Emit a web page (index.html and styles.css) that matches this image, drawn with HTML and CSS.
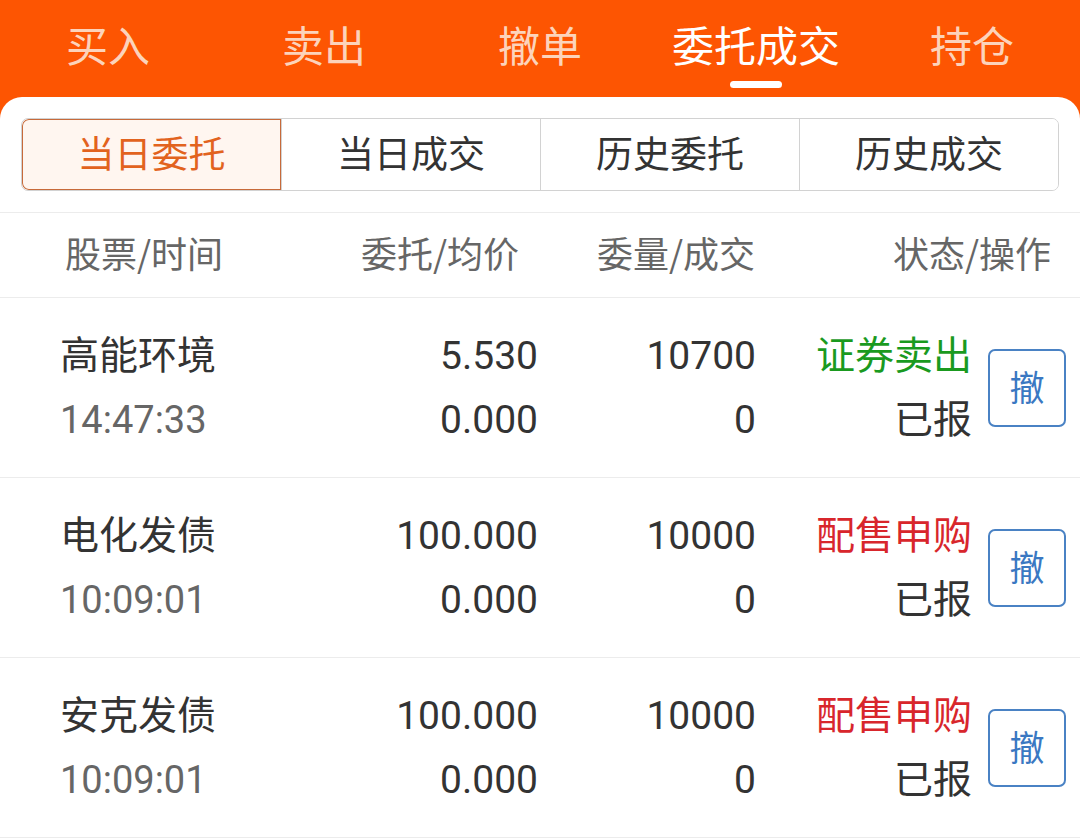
FILE: index.html
```html
<!doctype html>
<html lang="zh-cn">
<head>
  <meta charset="utf-8" />
  <meta name="viewport" content="width=device-width,initial-scale=1" />
  <title>委托成交</title>
  <link rel="stylesheet" href="styles.css">
</head>
<body>
  <div class="page">
    <nav class="tabs">
      <a class="tab">买入</a>
      <a class="tab">卖出</a>
      <a class="tab">撤单</a>
      <a class="tab active">委托成交</a>
      <a class="tab">持仓</a>
    </nav>

    <div class="card">
      <div class="seg-wrap">
        <div class="seg">
          <button class="seg-btn on">当日委托</button>
          <button class="seg-btn">当日成交</button>
          <button class="seg-btn">历史委托</button>
          <button class="seg-btn">历史成交</button>
        </div>
      </div>

      <div class="head">
        <div>股票/时间</div>
        <div class="r">委托/均价</div>
        <div class="r">委量/成交</div>
        <div class="r">状态/操作</div>
      </div>

      <div class="row">
        <div class="cell">
          <div class="name">高能环境</div>
          <div class="time">14:47:33</div>
        </div>
        <div class="cell r">
          <div class="num">5.530</div>
          <div class="num">0.000</div>
        </div>
        <div class="cell r">
          <div class="num">10700</div>
          <div class="num">0</div>
        </div>
        <div class="cell r">
          <div class="type sell">证券卖出</div>
          <div class="state">已报</div>
        </div>
        <div class="op"><button class="btn-cancel">撤</button></div>
      </div>

      <div class="row">
        <div class="cell">
          <div class="name">电化发债</div>
          <div class="time">10:09:01</div>
        </div>
        <div class="cell r">
          <div class="num">100.000</div>
          <div class="num">0.000</div>
        </div>
        <div class="cell r">
          <div class="num">10000</div>
          <div class="num">0</div>
        </div>
        <div class="cell r">
          <div class="type buy">配售申购</div>
          <div class="state">已报</div>
        </div>
        <div class="op"><button class="btn-cancel">撤</button></div>
      </div>

      <div class="row">
        <div class="cell">
          <div class="name">安克发债</div>
          <div class="time">10:09:01</div>
        </div>
        <div class="cell r">
          <div class="num">100.000</div>
          <div class="num">0.000</div>
        </div>
        <div class="cell r">
          <div class="num">10000</div>
          <div class="num">0</div>
        </div>
        <div class="cell r">
          <div class="type buy">配售申购</div>
          <div class="state">已报</div>
        </div>
        <div class="op"><button class="btn-cancel">撤</button></div>
      </div>
    </div>
  </div>
</body>
</html>
```

FILE: styles.css
```css
* { box-sizing:border-box; }
html, body { margin:0; padding:0; background:#fff; }
body { font-family: Roboto, "Noto Sans CJK SC", sans-serif; color:#333; }
.page { background:#fd5502; min-height:840px; display:flex; flex-direction:column; }

/* top tabs */
.tabs { display:grid; grid-template-columns: repeat(5, 1fr); height:97px; }
.tab { position:relative; display:flex; align-items:center; justify-content:center; padding-bottom:10px; font-size:42px; color:#fcd3bb; }
.tab.active { color:#fff; }
.tab.active::after { content:""; position:absolute; left:50%; bottom:9px; width:52px; height:7px; margin-left:-26px; border-radius:4px; background:#fff; }

/* card */
.card { flex:1; background:#fff; border-radius:22px 22px 0 0; }
.seg-wrap { padding:21px 21px 21px; border-bottom:1px solid #ececec; }
.seg { display:grid; grid-template-columns: repeat(4, 1fr); height:73px; border:1px solid #d2d2d2; border-radius:7px; overflow:hidden; }
.seg-btn { border:0; border-left:1px solid #d2d2d2; background:#fff; font-family:inherit; font-size:37px; color:#333; padding:0 0 5px; }
.seg-btn:first-child { border-left:0; }
.seg-btn.on { background:#fff6f0; color:#e2631e; box-shadow: inset 0 0 0 1px #c76a3a; border-radius:7px 0 0 7px; }

/* table header */
.head { display:grid; grid-template-columns: 296px 150px 244px 296px; padding:0 28px 0 65px; height:85px; align-items:center; font-family:"Noto Sans CJK SC", sans-serif; font-size:36px; color:#666; border-bottom:1px solid #ececec; white-space:nowrap; }
.head > div { padding-bottom:6px; }
.r { text-align:right; }

/* rows */
.row { display:grid; grid-template-columns: 302px 176px 218px 216px 94px; padding-left:60px; height:180px; align-items:center; border-bottom:1px solid #ececec; }
.cell { display:flex; flex-direction:column; gap:14px; white-space:nowrap; }
.name, .type, .state { font-size:39px; line-height:50px; color:#333; }
.num { font-size:39px; line-height:50px; color:#333; }
.time { font-size:38px; line-height:50px; color:#666; }
.type.sell { color:#1a9a1f; }
.type.buy { color:#d8262c; }
.op { display:flex; justify-content:flex-end; }
.btn-cancel { width:78px; height:78px; border:2px solid #4a82c4; border-radius:7px; background:#fff; color:#3a78c2; font-family:inherit; font-size:35px; padding:0 0 4px; }
```
